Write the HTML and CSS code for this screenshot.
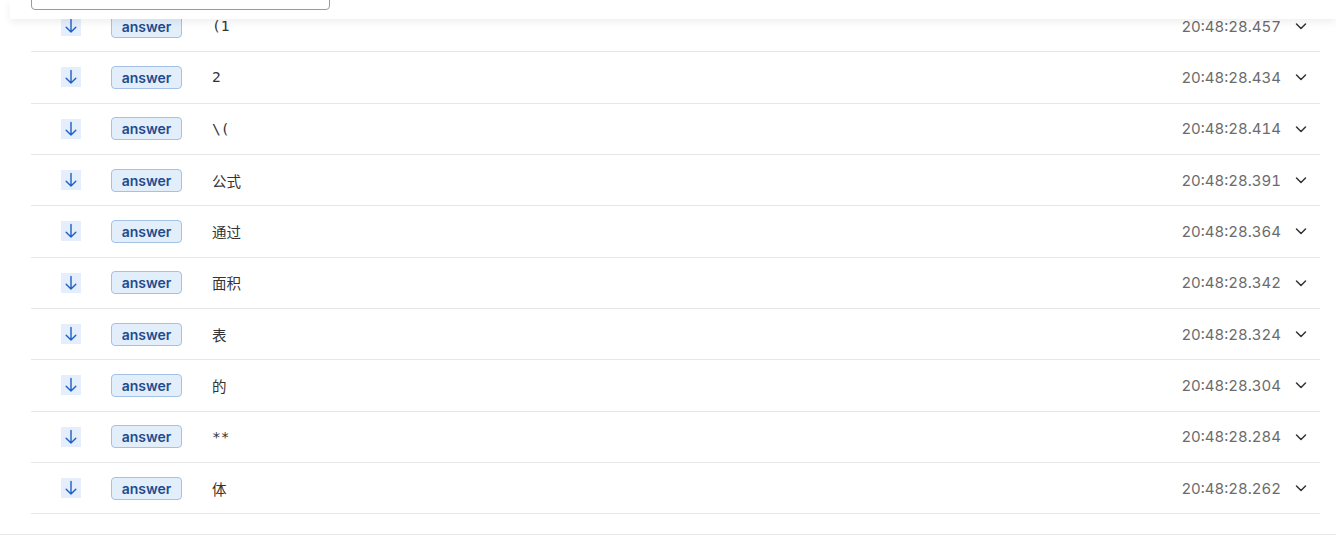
FILE: index.html
```html
<!DOCTYPE html>
<html>
<head>
<meta charset="utf-8">
<link rel="stylesheet" href="styles.css">
</head>
<body>
<div class="page">
  <div class="list">
    <div class="row"><span class="dir"><svg viewBox="0 0 20 20" width="20" height="20"><path d="M10 3.5v12.5M5.2 11.2L10 16l4.8-4.8" fill="none" stroke="#1f5fc4" stroke-width="1.4" stroke-linecap="round" stroke-linejoin="round"/></svg></span><span class="badge">answer</span><span class="content">(1</span><span class="time">20:48:28.457</span><span class="chev"><svg viewBox="0 0 16 16" width="16" height="16"><path d="M3.5 6l4.5 4.5L12.5 6" fill="none" stroke="#333" stroke-width="1.5" stroke-linecap="round" stroke-linejoin="round"/></svg></span></div>
    <div class="row"><span class="dir"><svg viewBox="0 0 20 20" width="20" height="20"><path d="M10 3.5v12.5M5.2 11.2L10 16l4.8-4.8" fill="none" stroke="#1f5fc4" stroke-width="1.4" stroke-linecap="round" stroke-linejoin="round"/></svg></span><span class="badge">answer</span><span class="content">2</span><span class="time">20:48:28.434</span><span class="chev"><svg viewBox="0 0 16 16" width="16" height="16"><path d="M3.5 6l4.5 4.5L12.5 6" fill="none" stroke="#333" stroke-width="1.5" stroke-linecap="round" stroke-linejoin="round"/></svg></span></div>
    <div class="row"><span class="dir"><svg viewBox="0 0 20 20" width="20" height="20"><path d="M10 3.5v12.5M5.2 11.2L10 16l4.8-4.8" fill="none" stroke="#1f5fc4" stroke-width="1.4" stroke-linecap="round" stroke-linejoin="round"/></svg></span><span class="badge">answer</span><span class="content">\(</span><span class="time">20:48:28.414</span><span class="chev"><svg viewBox="0 0 16 16" width="16" height="16"><path d="M3.5 6l4.5 4.5L12.5 6" fill="none" stroke="#333" stroke-width="1.5" stroke-linecap="round" stroke-linejoin="round"/></svg></span></div>
    <div class="row"><span class="dir"><svg viewBox="0 0 20 20" width="20" height="20"><path d="M10 3.5v12.5M5.2 11.2L10 16l4.8-4.8" fill="none" stroke="#1f5fc4" stroke-width="1.4" stroke-linecap="round" stroke-linejoin="round"/></svg></span><span class="badge">answer</span><span class="content">公式</span><span class="time">20:48:28.391</span><span class="chev"><svg viewBox="0 0 16 16" width="16" height="16"><path d="M3.5 6l4.5 4.5L12.5 6" fill="none" stroke="#333" stroke-width="1.5" stroke-linecap="round" stroke-linejoin="round"/></svg></span></div>
    <div class="row"><span class="dir"><svg viewBox="0 0 20 20" width="20" height="20"><path d="M10 3.5v12.5M5.2 11.2L10 16l4.8-4.8" fill="none" stroke="#1f5fc4" stroke-width="1.4" stroke-linecap="round" stroke-linejoin="round"/></svg></span><span class="badge">answer</span><span class="content">通过</span><span class="time">20:48:28.364</span><span class="chev"><svg viewBox="0 0 16 16" width="16" height="16"><path d="M3.5 6l4.5 4.5L12.5 6" fill="none" stroke="#333" stroke-width="1.5" stroke-linecap="round" stroke-linejoin="round"/></svg></span></div>
    <div class="row"><span class="dir"><svg viewBox="0 0 20 20" width="20" height="20"><path d="M10 3.5v12.5M5.2 11.2L10 16l4.8-4.8" fill="none" stroke="#1f5fc4" stroke-width="1.4" stroke-linecap="round" stroke-linejoin="round"/></svg></span><span class="badge">answer</span><span class="content">面积</span><span class="time">20:48:28.342</span><span class="chev"><svg viewBox="0 0 16 16" width="16" height="16"><path d="M3.5 6l4.5 4.5L12.5 6" fill="none" stroke="#333" stroke-width="1.5" stroke-linecap="round" stroke-linejoin="round"/></svg></span></div>
    <div class="row"><span class="dir"><svg viewBox="0 0 20 20" width="20" height="20"><path d="M10 3.5v12.5M5.2 11.2L10 16l4.8-4.8" fill="none" stroke="#1f5fc4" stroke-width="1.4" stroke-linecap="round" stroke-linejoin="round"/></svg></span><span class="badge">answer</span><span class="content">表</span><span class="time">20:48:28.324</span><span class="chev"><svg viewBox="0 0 16 16" width="16" height="16"><path d="M3.5 6l4.5 4.5L12.5 6" fill="none" stroke="#333" stroke-width="1.5" stroke-linecap="round" stroke-linejoin="round"/></svg></span></div>
    <div class="row"><span class="dir"><svg viewBox="0 0 20 20" width="20" height="20"><path d="M10 3.5v12.5M5.2 11.2L10 16l4.8-4.8" fill="none" stroke="#1f5fc4" stroke-width="1.4" stroke-linecap="round" stroke-linejoin="round"/></svg></span><span class="badge">answer</span><span class="content">的</span><span class="time">20:48:28.304</span><span class="chev"><svg viewBox="0 0 16 16" width="16" height="16"><path d="M3.5 6l4.5 4.5L12.5 6" fill="none" stroke="#333" stroke-width="1.5" stroke-linecap="round" stroke-linejoin="round"/></svg></span></div>
    <div class="row"><span class="dir"><svg viewBox="0 0 20 20" width="20" height="20"><path d="M10 3.5v12.5M5.2 11.2L10 16l4.8-4.8" fill="none" stroke="#1f5fc4" stroke-width="1.4" stroke-linecap="round" stroke-linejoin="round"/></svg></span><span class="badge">answer</span><span class="content">**</span><span class="time">20:48:28.284</span><span class="chev"><svg viewBox="0 0 16 16" width="16" height="16"><path d="M3.5 6l4.5 4.5L12.5 6" fill="none" stroke="#333" stroke-width="1.5" stroke-linecap="round" stroke-linejoin="round"/></svg></span></div>
    <div class="row"><span class="dir"><svg viewBox="0 0 20 20" width="20" height="20"><path d="M10 3.5v12.5M5.2 11.2L10 16l4.8-4.8" fill="none" stroke="#1f5fc4" stroke-width="1.4" stroke-linecap="round" stroke-linejoin="round"/></svg></span><span class="badge">answer</span><span class="content">体</span><span class="time">20:48:28.262</span><span class="chev"><svg viewBox="0 0 16 16" width="16" height="16"><path d="M3.5 6l4.5 4.5L12.5 6" fill="none" stroke="#333" stroke-width="1.5" stroke-linecap="round" stroke-linejoin="round"/></svg></span></div>
  </div>
  <div class="toolbar"><div class="search"></div></div>
</div>
</body>
</html>
```

FILE: styles.css
```css
html, body {
  margin: 0;
  padding: 0;
  background: #ffffff;
  font-family: Inter, "Noto Sans CJK SC", sans-serif;
  overflow: hidden;
}
.page {
  position: relative;
  width: 1336px;
  height: 536px;
}
.list {
  padding: 1px 16px 20px 31px;
  border-bottom: 1px solid #e8e8e8;
}
.row {
  display: flex;
  align-items: center;
  height: 50.33px;
  border-bottom: 1px solid #e6e6e6;
  padding-left: 30px;
  padding-right: 11px;
}
.dir {
  width: 20px;
  height: 20px;
  background: #e4eefc;
  display: flex;
  flex-shrink: 0;
}
.badge {
  margin-left: 30px;
  width: 69px;
  height: 21px;
  border: 1px solid #a6c1e6;
  border-radius: 4px;
  background: #e3eefb;
  color: #1f4b8e;
  font-size: 14px;
  font-weight: 600;
  line-height: 21px;
  text-align: center;
  flex-shrink: 0;
}
.content {
  margin-left: 30px;
  flex: 1;
  font-family: "DejaVu Sans Mono", "Noto Sans CJK SC", monospace;
  font-size: 14.5px;
  color: #333;
}
.time {
  font-size: 15px;
  color: #6b6b6b;
  font-variant-numeric: tabular-nums;
}
.chev {
  margin-left: 12px;
  display: flex;
}
.toolbar {
  position: absolute;
  top: 0;
  left: 10px;
  right: 0;
  height: 19px;
  background: #ffffff;
  box-shadow: 0 3px 8px rgba(0, 0, 0, 0.07);
  display: flex;
  flex-direction: column;
  justify-content: flex-end;
  padding-left: 21px;
}
.search {
  width: 297px;
  height: 32px;
  margin-bottom: 9px;
  border: 1px solid #9a9a9a;
  border-radius: 4px;
  background: #fff;
  flex-shrink: 0;
}
```
